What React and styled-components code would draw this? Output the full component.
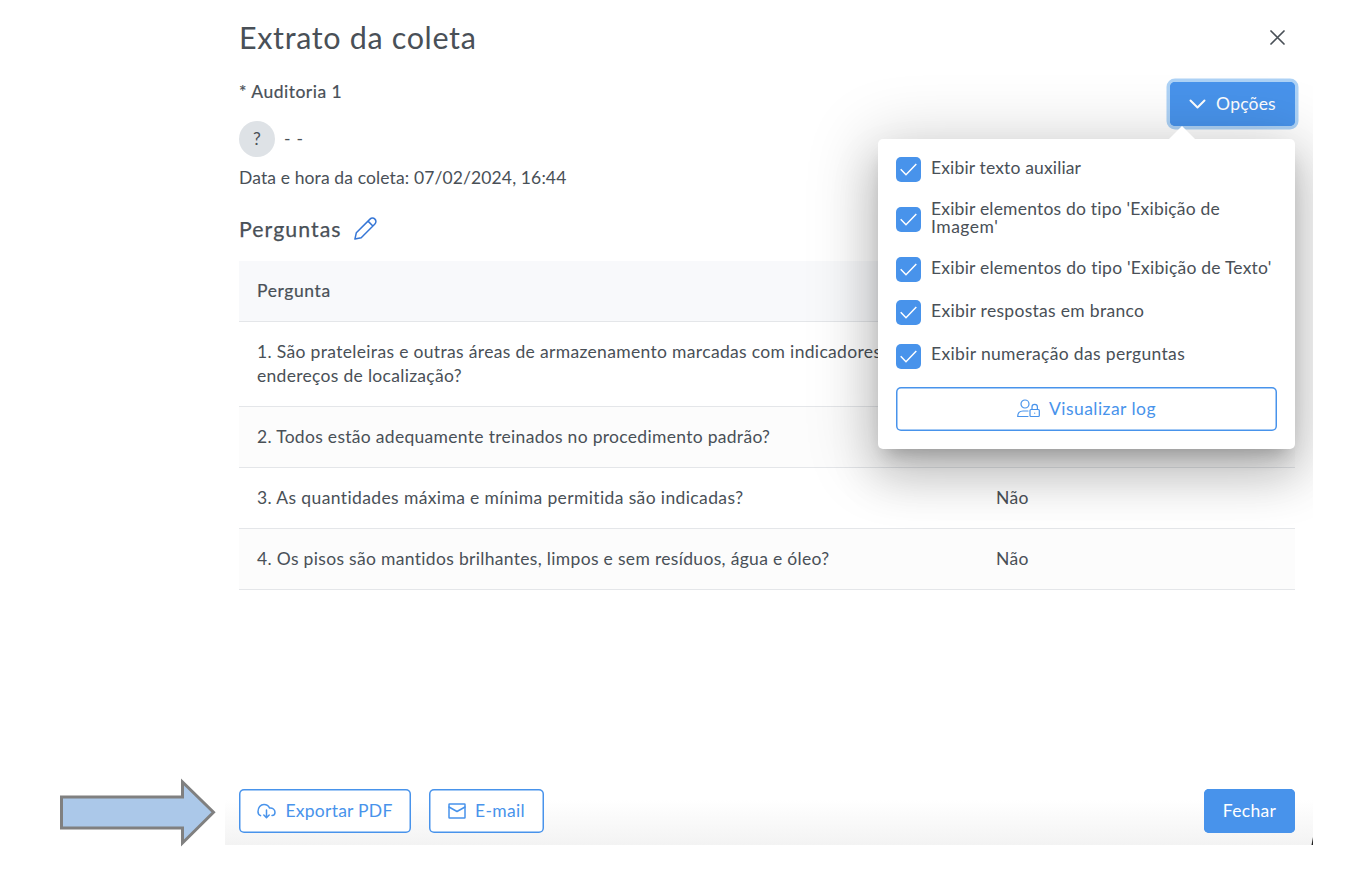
import React from "react";
import styled, { createGlobalStyle } from "styled-components";

const GlobalStyle = createGlobalStyle`
  * { box-sizing: border-box; }
  body {
    margin: 0;
    background: #fff;
    color: #495057;
    font-family: Lato, "Liberation Sans", sans-serif;
    font-size: 17.5px;
    overflow: hidden;
  }
`;

const Page = styled.div`
  position: relative;
  width: 1366px;
  height: 872px;
  padding-left: 225px;
`;

const Modal = styled.div`
  width: 1088px;
  height: 845px;
  padding: 0 18px 0 14px;
  overflow: hidden;
  display: flex;
  flex-direction: column;
  background: linear-gradient(#fff 0, #fff 800px, #f3f3f3 845px);
`;

const Text = styled.span`
  display: block;
  white-space: nowrap;
  letter-spacing: ${(p) => p.$track || 0}px;
`;

const Header = styled.header`
  display: flex;
  justify-content: space-between;
  align-items: center;
  height: 75px;
  padding-right: 10px;
`;

const Title = styled.h1`
  margin: 0;
  padding-bottom: 2px;
  font-size: 30.5px;
  font-weight: 400;
  line-height: 40px;
`;

const Summary = styled.section`
  display: flex;
  justify-content: space-between;
  height: 115px;
`;

const Details = styled.div`
  display: flex;
  flex-direction: column;
  padding-top: 5px;
  line-height: 24px;
`;

const AuditName = styled.div`
  -webkit-text-stroke: 0.2px currentColor;
`;

const Person = styled.div`
  display: flex;
  align-items: center;
  gap: 9px;
  margin: 17px 0 9px;
`;

const Avatar = styled.div`
  width: 36px;
  height: 36px;
  border-radius: 50%;
  background: #dee2e6;
  display: grid;
  place-items: center;
`;

const Actions = styled.div`
  position: relative;
  padding-top: 7px;
`;

const Button = styled.button`
  height: 44px;
  width: ${(p) => p.$width};
  padding: 0 0 1px;
  display: flex;
  align-items: center;
  justify-content: center;
  gap: ${(p) => p.$gap || 9}px;
  border: 0;
  border-radius: 5px;
  background: ${(p) => (p.$solid ? "#4893eb" : "#fff")};
  color: ${(p) => (p.$solid ? "#fff" : "#4893eb")};
  font: inherit;
  box-shadow: inset 0 0 0 1.5px #4893eb${(p) => (p.$focused ? ", 0 0 0 3.5px #add2f6" : "")};
`;

const Popover = styled.div`
  position: absolute;
  top: 64px;
  right: 0;
  width: 417px;
  height: 310px;
  padding: 18px;
  display: flex;
  flex-direction: column;
  gap: 18px;
  border-radius: 5px;
  background: #fff;
  box-shadow: 0 12px 17px -8px rgba(0, 0, 0, 0.22), 0 27px 45px 3px rgba(0, 0, 0, 0.15),
    0 8px 64px 10px rgba(0, 0, 0, 0.17);

  &::before {
    content: "";
    position: absolute;
    top: -13px;
    left: 291px;
    border: 13px solid transparent;
    border-top: 0;
    border-bottom-color: #fff;
  }
`;

const Option = styled.label`
  display: flex;
  align-items: center;
  gap: 10px;
  height: ${(p) => (p.$tall ? 39 : 25)}px;
  line-height: 18px;

  &:nth-last-of-type(1) { height: 26px; }
`;

const Box = styled.span`
  flex: none;
  width: 25px;
  height: 25px;
  border-radius: 5px;
  background: #4893eb;
  display: grid;
  place-items: center;
`;

const OptionText = styled.span`
  padding-bottom: 4px;
`;

const Section = styled.h2`
  margin: 0 0 18px;
  height: 53px;
  padding-top: 26px;
  display: flex;
  align-items: center;
  gap: 12px;
  font-size: 21.3px;
  font-weight: 400;
  line-height: 27px;
  -webkit-text-stroke: 0.25px currentColor;

  svg { margin-top: -3px; }
`;

const Table = styled.div`
  display: flex;
  flex-direction: column;
`;

const Row = styled.div`
  display: grid;
  grid-template-columns: 739px 1fr;
  height: ${(p) => p.$height}px;
  padding: 18px 18px 0;
  line-height: 24px;
  border-bottom: 1px solid #e4e6e9;
  background: ${(p) => (p.$head ? "#f8f9fb" : p.$striped ? "#fcfcfc" : "#fff")};
  -webkit-text-stroke: ${(p) => (p.$head ? 0.2 : 0)}px currentColor;
`;

const Footer = styled.footer`
  display: flex;
  gap: 18px;
  margin-top: auto;
  padding-bottom: 12px;

  > :last-child { margin-left: auto; }
`;

const Pointer = styled.svg`
  position: absolute;
  left: 58px;
  top: 774px;
`;

const Corner = styled.svg`
  position: absolute;
  left: 1310px;
  top: 837px;
`;

const Icon = ({ w, h, sw = 1.5, children }) => (
  <svg width={w} height={h} viewBox={`0 0 ${w} ${h}`} fill="none" stroke="currentColor"
    strokeWidth={sw} strokeLinecap="round" strokeLinejoin="round">{children}</svg>
);

const options = [
  { lines: ["Exibir texto auxiliar"], track: [0.15] },
  { lines: ["Exibir elementos do tipo 'Exibição de", "Imagem'"], track: [0.2, 0.5] },
  { lines: ["Exibir elementos do tipo 'Exibição de Texto'"], track: [0.22] },
  { lines: ["Exibir respostas em branco"], track: [0.3] },
  { lines: ["Exibir numeração das perguntas"], track: [0.34] },
];

const rows = [
  { height: 85, lines: ["1. São prateleiras e outras áreas de armazenamento marcadas com indicadores", "endereços de localização?"], track: [0.33, 0.3] },
  { height: 61, lines: ["2. Todos estão adequamente treinados no procedimento padrão?"], track: [0.3] },
  { height: 61, lines: ["3. As quantidades máxima e mínima permitida são indicadas?"], track: [0.38], answer: "Não" },
  { height: 61, lines: ["4. Os pisos são mantidos brilhantes, limpos e sem resíduos, água e óleo?"], track: [0.32], answer: "Não" },
];

export default function App() {
  return (
    <Page>
      <GlobalStyle />
      <Modal>
        <Header>
          <Title><Text $track={0.65}>Extrato da coleta</Text></Title>
          <Icon w={15} h={15} sw={1.7}><path d="M1 1 14 14M14 1 1 14" /></Icon>
        </Header>
        <Summary>
          <Details>
            <AuditName><Text $track={0.5}>* Auditoria 1</Text></AuditName>
            <Person><Avatar>?</Avatar><Text $track={0.8}>- -</Text></Person>
            <Text $track={0.12}>Data e hora da coleta: 07/02/2024, 16:44</Text>
          </Details>
          <Actions>
            <Button $solid $focused $width="125px" $gap={10}>
              <Icon w={17} h={10} sw={2}><path d="M1.5 1.5 8.5 8.5 15.5 1.5" /></Icon>
              <Text $track={0.2}>Opções</Text>
            </Button>
            <Popover>
              {options.map((o) => (
                <Option key={o.lines[0]} $tall={o.lines.length > 1}>
                  <Box>
                    <svg width="17" height="13" viewBox="0 0 17 13" fill="none" stroke="#fff" strokeWidth="1.5"><path d="M.7 6.3 6 11.7 16.3 1" /></svg>
                  </Box>
                  <OptionText>
                    {o.lines.map((l, i) => <Text key={l} $track={o.track[i]}>{l}</Text>)}
                  </OptionText>
                </Option>
              ))}
              <Button $width="100%">
                <Icon w={23} h={19} sw={1.2}>
                  <circle cx="8" cy="5" r="4" />
                  <path d="M11 12H6C3 12 .7 14 .7 17.5H11" />
                  <rect x="13" y="10.5" width="9.3" height="7" rx="1" />
                  <path d="M15 10.5V8a2.7 2.7 0 0 1 5.4 0v2.5M17.7 14v.2" />
                </Icon>
                <Text $track={0.45}>Visualizar log</Text>
              </Button>
            </Popover>
          </Actions>
        </Summary>
        <Section>
          <Text $track={1.05}>Perguntas</Text>
          <svg width="23" height="23" viewBox="0 0 23 23" fill="none" stroke="#3576d6" strokeWidth="1.5" strokeLinejoin="round">
            <path d="M.9 22.1 2.3 15.8 16 2.1a3.4 3.4 0 0 1 4.9 4.9L7.2 20.7ZM14 4.1 18.9 9" />
          </svg>
        </Section>
        <Table>
          <Row $head $height={61}><Text $track={0.6}>Pergunta</Text></Row>
          {rows.map((r, n) => (
            <Row key={r.lines[0]} $height={r.height} $striped={n % 2 === 1}>
              <div>{r.lines.map((l, i) => <Text key={l} $track={r.track[i]}>{l}</Text>)}</div>
              {r.answer && <Text $track={0.3}>{r.answer}</Text>}
            </Row>
          ))}
        </Table>
        <Footer>
          <Button $width="172px">
            <Icon w={19} h={16}>
              <path d="M3.6 12.6A4.2 4.2 0 0 1 1 8.500C1 4.500 3.500 1.500 7 1.500c2.800 0 4.600 1.300 5.600 3.600 3-.3 5.400 1.300 5.400 4.200 0 1.900-1.200 3.300-3 3.300M9.500 7v7.500M6.800 12 9.500 14.700 12.200 12" />
            </Icon>
            <Text $track={0.25}>Exportar PDF</Text>
          </Button>
          <Button $width="115px">
            <Icon w={18} h={16}><rect x="1" y="1" width="16" height="14" rx="0.5" /><path d="M1 4 9 8.5 17 4" /></Icon>
            <Text $track={0.3}>E-mail</Text>
          </Button>
          <Button $solid $width="91px"><Text $track={0.35}>Fechar</Text></Button>
        </Footer>
      </Modal>
      <Pointer width="160" height="76">
        <path d="M3.5 23H124.5V8L155.5 38.3 124.5 69V54H3.5Z" fill="#abc8e9" stroke="#808080" strokeWidth="3" />
      </Pointer>
      <Corner width="3" height="8"><path d="M3 0V8H1.5Z" fill="#222" /></Corner>
    </Page>
  );
}
